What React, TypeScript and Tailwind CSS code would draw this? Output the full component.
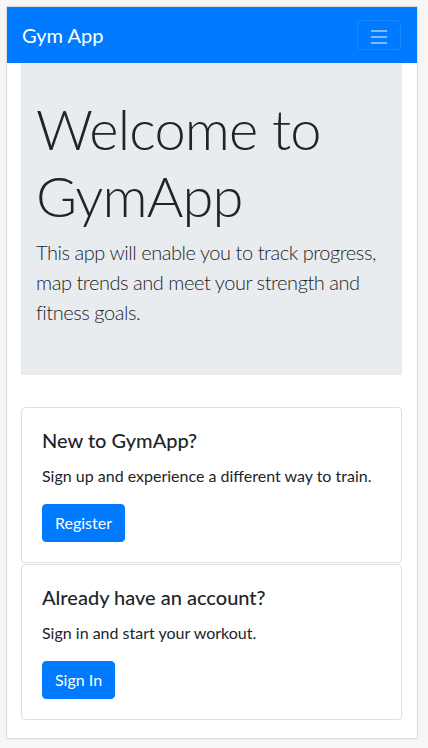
export default function App() {
  return (
    <div className="min-h-[748px] bg-[#f6f6f6] pt-[6px] pl-[6px] pr-[10px] text-[#212529]" style={{ fontFamily: 'Lato, "Open Sans", sans-serif' }}>
      <div className="border border-[#dedede] bg-white pb-[18px] shadow-[0_0_3px_rgba(0,0,0,0.05)]">
        <nav className="flex h-[56px] items-center justify-between bg-[#007bff] pl-[15px] pr-[16px]">
          <a className="text-[20px] leading-[30px] text-white">Gym App</a>
          <button className="flex h-[30px] w-[44px] flex-col items-center justify-center gap-[4px] rounded-[4px] border border-white/10 pt-[3px]">
            <span className="block h-[2px] w-[16px] bg-white/50" />
            <span className="block h-[2px] w-[16px] bg-white/50" />
            <span className="block h-[2px] w-[16px] bg-white/50" />
          </button>
        </nav>

        <div className="px-[14px] pr-[15px]">
          <div className="mb-[32px] bg-[#e9ecef] px-[15px] pb-[32px] pt-[32px]">
            <h1 className="mb-[8px] text-[56px] font-light leading-[67px] tracking-[-0.8px]">Welcome to GymApp</h1>
            <p className="mb-[16px] text-[20px] font-light leading-[30px] tracking-[-0.45px]">
              This app will enable you to track progress, map trends and meet your strength and fitness goals.
            </p>
          </div>

          <div className="flex flex-col gap-[1px]">
            <div className="rounded-[4px] border border-black/[0.125] p-[20px]">
              <h5 className="mb-[12px] text-[20px] font-medium leading-[24px]">New to GymApp?</h5>
              <p className="mb-[16px] text-[16px] leading-[24px]">Sign up and experience a different way to train.</p>
              <button className="rounded-[4px] border border-[#007bff] bg-[#007bff] px-[12px] py-[6px] text-[16px] leading-[24px] text-white">
                Register
              </button>
            </div>
            <div className="rounded-[4px] border border-black/[0.125] p-[20px]">
              <h5 className="mb-[12px] text-[20px] font-medium leading-[24px]">Already have an account?</h5>
              <p className="mb-[16px] text-[16px] leading-[24px]">Sign in and start your workout.</p>
              <button className="rounded-[4px] border border-[#007bff] bg-[#007bff] px-[12px] py-[6px] text-[16px] leading-[24px] text-white">
                Sign In
              </button>
            </div>
          </div>
        </div>
      </div>
    </div>
  );
}
